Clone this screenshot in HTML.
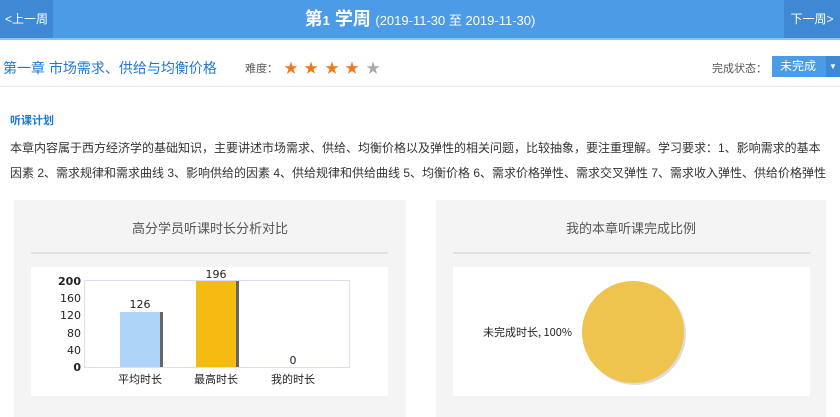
<!DOCTYPE html>
<html><head><meta charset="utf-8"><style>
*{margin:0;padding:0;box-sizing:border-box}
body{width:840px;height:417px;overflow:hidden;background:#fff;font-family:"Liberation Sans","Noto Sans CJK SC",sans-serif;position:relative}
.abs{position:absolute}
.st{position:absolute;top:58px;font-size:14px;color:#f07a1a}
</style></head><body>
<div class="abs" style="left:0;top:0;width:840px;height:38px;background:#4b9be6"></div>
<div class="abs" style="left:0;top:0;width:53px;height:38px;background:#3e88d4;color:#fff;font-size:12px;line-height:38px;text-align:center">&lt;上一周</div>
<div class="abs" style="left:784px;top:0;width:56px;height:38px;background:#3e88d4;color:#fff;font-size:12px;line-height:38px;text-align:center">下一周&gt;</div>
<div class="abs" style="left:0;top:0;width:840px;height:38px;color:#fff;line-height:38px;text-align:center"><b style="font-size:18px">第<span style="font-size:13px">1</span> 学周</b> <span style="font-size:13px">(2019-11-30 至 2019-11-30)</span></div>
<div class="abs" style="left:0;top:38px;width:840px;height:2px;background:#8cc0ef"></div>
<div class="abs" style="left:3px;top:58px;font-size:14px;color:#1f78d1">第一章 市场需求、供给与均衡价格</div>
<div class="abs" style="left:245px;top:60px;font-size:11px;color:#555">难度：</div>
<span class="st" style="left:284px">★</span><span class="st" style="left:304px">★</span><span class="st" style="left:325px">★</span><span class="st" style="left:345px">★</span><span class="st" style="left:366px;color:#aaa">★</span>
<div class="abs" style="left:712px;top:60px;font-size:11px;color:#555">完成状态：</div>
<div class="abs" style="left:772px;top:56px;width:54px;height:21px;background:#4b9be6;color:#fff;font-size:12px;line-height:21px;padding-left:8px">未完成</div>
<div class="abs" style="left:826px;top:56px;width:14px;height:21px;background:#3e88d4;color:#fff;font-size:8px;line-height:21px;text-align:center">▼</div>
<div class="abs" style="left:0;top:86px;width:840px;height:1px;background:#e6e6e6"></div>
<div class="abs" style="left:10px;top:112px;font-size:11px;color:#1f78d1;font-weight:bold">听课计划</div>
<div class="abs" style="left:10px;top:136px;width:830px;font-size:12px;color:#333;line-height:25px;white-space:nowrap">本章内容属于西方经济学的基础知识，主要讲述市场需求、供给、均衡价格以及弹性的相关问题，比较抽象，要注重理解。学习要求：1、影响需求的基本<br>因素 2、需求规律和需求曲线 3、影响供给的因素 4、供给规律和供给曲线 5、均衡价格 6、需求价格弹性、需求交叉弹性 7、需求收入弹性、供给价格弹性</div>

<div class="abs" style="left:14px;top:200px;width:392px;height:217px;background:#f4f4f4"></div>
<div class="abs" style="left:14px;top:218px;width:392px;text-align:center;font-size:13px;color:#555">高分学员听课时长分析对比</div>
<div class="abs" style="left:31px;top:252px;width:357px;height:2px;background:#e2e2e2"></div>
<div class="abs" style="left:31px;top:267px;width:357px;height:129px;background:#fff"></div>
<svg class="abs" style="left:0;top:260px" width="406" height="140">
<rect x="84.5" y="20.5" width="265" height="87" fill="none" stroke="#dcdcf4"/>
<g font-family="DejaVu Sans,sans-serif" font-size="11" fill="#222" text-anchor="end">
<text x="81" y="25" font-weight="bold">200</text><text x="81" y="42">160</text><text x="81" y="59">120</text><text x="81" y="77">80</text><text x="81" y="94">40</text><text x="81" y="111" font-weight="bold">0</text></g>
<rect x="122" y="52" width="41" height="55" fill="#666"/>
<rect x="120" y="52" width="40" height="55" fill="#acd5f7"/>
<rect x="198" y="21" width="41" height="86" fill="#666"/>
<rect x="196" y="21" width="40" height="86" fill="#f4bc10"/>
<g font-family="DejaVu Sans,sans-serif" font-size="11" fill="#222" text-anchor="middle">
<text x="140" y="48">126</text><text x="216" y="18">196</text><text x="293" y="104">0</text></g>
<g font-size="11" fill="#222" text-anchor="middle" font-family="Noto Sans CJK SC,sans-serif">
<text x="140" y="123">平均时长</text><text x="216" y="123">最高时长</text><text x="293" y="123">我的时长</text></g>
</svg>

<div class="abs" style="left:436px;top:200px;width:390px;height:217px;background:#f4f4f4"></div>
<div class="abs" style="left:436px;top:218px;width:390px;text-align:center;font-size:13px;color:#555">我的本章听课完成比例</div>
<div class="abs" style="left:453px;top:252px;width:357px;height:2px;background:#e2e2e2"></div>
<div class="abs" style="left:453px;top:267px;width:357px;height:129px;background:#fff"></div>
<svg class="abs" style="left:453px;top:267px" width="357" height="129">
<circle cx="182" cy="67" r="51" fill="#ddd"/>
<circle cx="180" cy="65" r="51" fill="#efc44e"/>
<text x="30" y="69" font-size="11" fill="#222" font-family="Noto Sans CJK SC,sans-serif">未完成时长, 100%</text>
</svg>
</body></html>
